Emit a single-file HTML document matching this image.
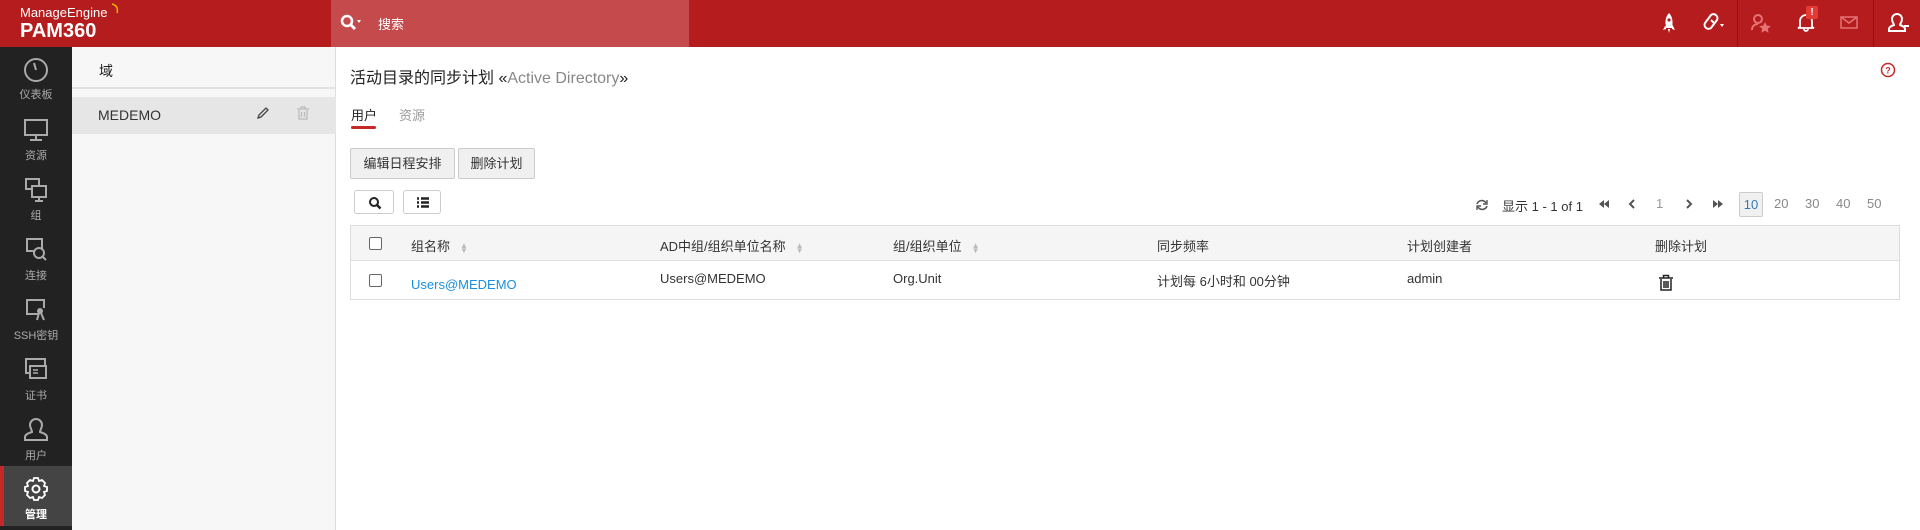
<!DOCTYPE html>
<html><head><meta charset="utf-8"><style>
*{margin:0;padding:0;box-sizing:border-box}
body{width:1920px;height:530px;overflow:hidden;background:#fff;font-family:"Liberation Sans","Noto Sans CJK SC",sans-serif;font-size:14px;color:#333;position:relative}
.abs{position:absolute}
#hdr{left:0;top:0;width:1920px;height:47px;background:#b51c1e}
#search{left:331px;top:0;width:358px;height:47px;background:#c44a4c}
#side{left:0;top:47px;width:72px;height:483px;background:#222}
.si{position:absolute;left:0;width:72px;text-align:center;color:#aaa;font-size:11px}
.si svg{display:block;margin:0 auto 4px}
#panel{left:72px;top:47px;width:264px;height:483px;background:#f7f7f7;border-right:1px solid #ddd}
.btn{position:absolute;background:#f0f0f0;border:1px solid #ccc;border-radius:2px;font-size:13px;text-align:center;line-height:29px;color:#333}
.ib{position:absolute;background:#fff;border:1px solid #ccc;border-radius:3px}
.th{position:absolute;top:236px;font-size:13px;color:#333}
.td{position:absolute;top:271px;font-size:13px;color:#333}
.sort{display:inline-block;margin-left:10px;color:#bbb;font-size:8px;line-height:5px;vertical-align:middle}
.cb{position:absolute;left:369px;width:13px;height:13px;border:1px solid #666;border-radius:2px;background:#fff}
.pg{position:absolute;top:196px;font-size:13px;color:#888}
</style></head><body>
<div id="hdr" class="abs"></div>
<div class="abs" style="left:20px;top:5px;color:#fff;font-size:13px;">ManageEngine</div>
<svg class="abs" style="left:110px;top:2px" width="10" height="12"><path d="M2 2 Q9 4 7 11" stroke="#f4b400" stroke-width="1.5" fill="none"/></svg>
<div class="abs" style="left:20px;top:20px;color:#fff;font-size:20px;font-weight:bold;">PAM360</div>
<div id="search" class="abs"></div>
<svg class="abs" style="left:340px;top:14px" width="22" height="18"><circle cx="7" cy="7" r="5" stroke="#fff" stroke-width="2.5" fill="none"/><path d="M11 11 L15 15" stroke="#fff" stroke-width="3"/><path d="M17 6 L21 6 L19 9Z" fill="#fff"/></svg>
<div class="abs" style="left:378px;top:14px;color:#fff;font-size:13px;">搜索</div>
<svg class="abs" style="left:1660px;top:12px" width="18" height="22"><path d="M9 1 C13 5 13 11 12 16 L6 16 C5 11 5 5 9 1Z M6 12 L3 18 L6 17 M12 12 L15 18 L12 17 M8 17 L9 21 L10 17" fill="#fff"/><circle cx="9" cy="8" r="1.6" fill="#b51c1e"/></svg>
<svg class="abs" style="left:1702px;top:12px" width="24" height="22"><path d="M9 3 a4 4 0 0 1 6 5 l-6 8 a4 4 0 0 1 -6 -5z M9 8 l3 3" stroke="#fff" stroke-width="2" fill="none"/><path d="M18 12 l4 0 -2 3z" fill="#fff"/></svg>
<div class="abs" style="left:1737px;top:0;width:1px;height:47px;background:#8a1416"></div>
<svg class="abs" style="left:1750px;top:12px" width="22" height="22"><circle cx="8" cy="7" r="4" stroke="#e57373" stroke-width="2" fill="none"/><path d="M2 18 c0-4 3-6 6-6" stroke="#e57373" stroke-width="2" fill="none"/><path d="M15 10 l1.8 3.6 4 .5-3 2.7.8 4-3.6-2-3.6 2 .8-4-3-2.7 4-.5z" fill="#e57373"/></svg>
<svg class="abs" style="left:1796px;top:12px" width="20" height="20"><path d="M4 15 L4 9 a6 6 0 0 1 12 0 L16 15 L18 16 L2 16 Z M8 17 a2 2 0 0 0 4 0" stroke="#fff" stroke-width="1.8" fill="none"/></svg>
<div class="abs" style="left:1806px;top:6px;width:12px;height:13px;background:#e53935;color:#fff;font-size:10px;font-weight:bold;text-align:center;line-height:13px;border-radius:2px">!</div>
<svg class="abs" style="left:1840px;top:16px" width="18" height="14"><rect x="1" y="1" width="16" height="11" stroke="#e57373" stroke-width="1.5" fill="none"/><path d="M1 1 L9 7 L17 1" stroke="#e57373" stroke-width="1.5" fill="none"/></svg>
<div class="abs" style="left:1873px;top:0;width:1px;height:47px;background:#8a1416"></div>
<svg class="abs" style="left:1887px;top:12px" width="24" height="22"><path d="M10 2 a5 5 0 0 1 5 5 c0 3-2 5-2 6 c3 1 5 2 5 4 v2 H2 v-2 c0-2 2-3 5-4 c0-1-2-3-2-6 a5 5 0 0 1 5-5z" stroke="#fff" stroke-width="2" fill="none"/><path d="M17 14 h5" stroke="#fff" stroke-width="2"/></svg>

<div id="side" class="abs"></div>
<div class="si" style="top:56px"><svg width="26" height="26"><circle cx="13" cy="14" r="11" stroke="#aaa" stroke-width="2" fill="none"/><path d="M13 14 L11 7" stroke="#aaa" stroke-width="2"/></svg>仪表板</div>
<div class="si" style="top:117px"><svg width="26" height="26"><rect x="2" y="3" width="22" height="15" stroke="#aaa" stroke-width="2" fill="none"/><path d="M13 18v4M7 23h12" stroke="#aaa" stroke-width="2"/></svg>资源</div>
<div class="si" style="top:177px"><svg width="26" height="26"><rect x="3" y="2" width="13" height="10" stroke="#aaa" stroke-width="2" fill="none"/><rect x="9" y="9" width="14" height="11" stroke="#aaa" stroke-width="2" fill="#222"/><path d="M16 20v3M12 24h8" stroke="#aaa" stroke-width="2"/></svg>组</div>
<div class="si" style="top:237px"><svg width="26" height="26"><rect x="4" y="2" width="15" height="12" stroke="#aaa" stroke-width="2" fill="none"/><circle cx="16" cy="16" r="5" stroke="#aaa" stroke-width="2" fill="#222"/><path d="M20 20l3 3" stroke="#aaa" stroke-width="2"/></svg>连接</div>
<div class="si" style="top:297px"><svg width="26" height="26"><path d="M15 17H4V3h17v8" stroke="#aaa" stroke-width="2" fill="none"/><circle cx="17" cy="14" r="3" fill="#aaa"/><path d="M16 16l-2 7M18 16l3 7" stroke="#aaa" stroke-width="2"/></svg>SSH密钥</div>
<div class="si" style="top:357px"><svg width="26" height="26"><rect x="3" y="2" width="19" height="14" stroke="#aaa" stroke-width="2" fill="none"/><rect x="7" y="9" width="16" height="12" stroke="#aaa" stroke-width="2" fill="#222"/><path d="M10 13h5M10 16h5" stroke="#aaa" stroke-width="1.5"/></svg>证书</div>
<div class="si" style="top:417px"><svg width="26" height="26"><path d="M13 2a6 6 0 0 1 6 6c0 3-2 5-2 7c4 1 7 3 7 5v3H2v-3c0-2 3-4 7-5c0-2-2-4-2-7a6 6 0 0 1 6-6z" stroke="#aaa" stroke-width="2" fill="none"/></svg>用户</div>
<div class="abs" style="left:0;top:466px;width:72px;height:60px;background:#444;border-left:4px solid #c62828"></div>
<div class="si" style="top:476px;color:#fff;font-weight:bold"><svg width="26" height="26"><circle cx="13" cy="13" r="3.5" stroke="#fff" stroke-width="2" fill="none"/><path d="M11 2h4l1 3 3-1 3 3-1 3 3 1v4l-3 1 1 3-3 3-3-1-1 3h-4l-1-3-3 1-3-3 1-3-3-1v-4l3-1-1-3 3-3 3 1z" stroke="#fff" stroke-width="1.8" fill="none"/></svg>管理</div>

<div id="panel" class="abs"></div>
<div class="abs" style="left:99px;top:61px;font-size:14px;color:#222">域</div>
<div class="abs" style="left:72px;top:87px;width:264px;height:2px;background:#e2e2e2"></div>
<div class="abs" style="left:72px;top:97px;width:264px;height:37px;background:#e6e6e6"></div>
<div class="abs" style="left:98px;top:107px;font-size:14px;color:#333">MEDEMO</div>
<svg class="abs" style="left:256px;top:106px" width="14" height="14"><path d="M2 12 L3 9 L10 2 L12 4 L5 11 Z" stroke="#444" stroke-width="1.3" fill="none"/></svg>
<svg class="abs" style="left:296px;top:106px" width="14" height="14"><path d="M1 3h12M5 3V1h4v2M3 4v9h8V4M5.5 6v5M8.5 6v5" stroke="#bbb" stroke-width="1.3" fill="none"/></svg>

<div class="abs" style="left:350px;top:64px;font-size:16px;color:#222">活动目录的同步计划 «<span style="color:#888">Active Directory</span>»</div>
<svg class="abs" style="left:1880px;top:62px" width="16" height="16"><circle cx="8" cy="8" r="6.5" stroke="#c62828" stroke-width="1.5" fill="none"/><text x="8" y="11.5" font-size="9" font-weight="bold" text-anchor="middle" fill="#c62828" font-family="Liberation Sans">?</text></svg>
<div class="abs" style="left:351px;top:105px;font-size:13px;color:#222">用户</div>
<div class="abs" style="left:351px;top:126px;width:25px;height:3px;background:#c62828;border-radius:2px"></div>
<div class="abs" style="left:399px;top:105px;font-size:13px;color:#999">资源</div>

<div class="btn" style="left:350px;top:148px;width:105px;height:31px">编辑日程安排</div>
<div class="btn" style="left:458px;top:148px;width:77px;height:31px">删除计划</div>
<div class="ib" style="left:354px;top:190px;width:40px;height:24px"><svg style="position:absolute;left:13px;top:5px" width="14" height="14"><circle cx="6" cy="6" r="4" stroke="#222" stroke-width="2" fill="none"/><path d="M9 9l3.5 3.5" stroke="#222" stroke-width="2.5"/></svg></div>
<div class="ib" style="left:403px;top:190px;width:38px;height:24px"><svg style="position:absolute;left:12px;top:6px" width="14" height="12"><path d="M1 1.5h2M5 1.5h8M1 5.5h2M5 5.5h8M1 9.5h2M5 9.5h8" stroke="#222" stroke-width="2.5"/></svg></div>

<svg class="abs" style="left:1475px;top:198px" width="14" height="14"><path d="M11 5a5 5 0 0 0-9 1M3 9a5 5 0 0 0 9-1" stroke="#555" stroke-width="1.6" fill="none"/><path d="M12 2v4h-4M2 12V8h4" stroke="#555" stroke-width="1.4" fill="none"/></svg>
<div class="pg" style="left:1502px;color:#333">显示 1 - 1 of 1</div>
<svg class="abs" style="left:1598px;top:199px" width="12" height="10"><path d="M6 1L1 5l5 4zM11 1L6 5l5 4z" fill="#555"/></svg>
<svg class="abs" style="left:1628px;top:199px" width="8" height="10"><path d="M6 1L2 5l4 4" stroke="#555" stroke-width="2" fill="none"/></svg>
<div class="pg" style="left:1656px;color:#999">1</div>
<svg class="abs" style="left:1685px;top:199px" width="8" height="10"><path d="M2 1l4 4-4 4" stroke="#555" stroke-width="2" fill="none"/></svg>
<svg class="abs" style="left:1712px;top:199px" width="12" height="10"><path d="M1 1l5 4-5 4zM6 1l5 4-5 4z" fill="#555"/></svg>
<div class="abs" style="left:1739px;top:192px;width:24px;height:25px;border:1px solid #ccc;background:#f0f0f0;border-radius:2px;color:#337ab7;font-size:13px;text-align:center;line-height:23px">10</div>
<div class="pg" style="left:1774px">20</div>
<div class="pg" style="left:1805px">30</div>
<div class="pg" style="left:1836px">40</div>
<div class="pg" style="left:1867px">50</div>

<div class="abs" style="left:350px;top:225px;width:1550px;height:75px;border:1px solid #ddd"></div>
<div class="abs" style="left:351px;top:226px;width:1548px;height:35px;background:#f5f5f5;border-bottom:1px solid #ddd"></div>
<div class="cb" style="top:237px"></div>
<div class="cb" style="top:274px"></div>
<div class="th" style="left:411px">组名称<span class="sort">▲<br>▼</span></div>
<div class="th" style="left:660px">AD中组/组织单位名称<span class="sort">▲<br>▼</span></div>
<div class="th" style="left:893px">组/组织单位<span class="sort">▲<br>▼</span></div>
<div class="th" style="left:1157px">同步频率</div>
<div class="th" style="left:1407px">计划创建者</div>
<div class="th" style="left:1655px">删除计划</div>
<div class="td" style="left:411px;top:277px;color:#1a8fe0">Users@MEDEMO</div>
<div class="td" style="left:660px">Users@MEDEMO</div>
<div class="td" style="left:893px">Org.Unit</div>
<div class="td" style="left:1157px">计划每 6小时和 00分钟</div>
<div class="td" style="left:1407px">admin</div>
<svg class="abs" style="left:1658px;top:274px" width="16" height="18"><path d="M1 4h14M5.5 4V1.5h5V4M3 5v11h10V5M6 7v7M8 7v7M10 7v7" stroke="#222" stroke-width="1.5" fill="none"/></svg>
</body></html>
